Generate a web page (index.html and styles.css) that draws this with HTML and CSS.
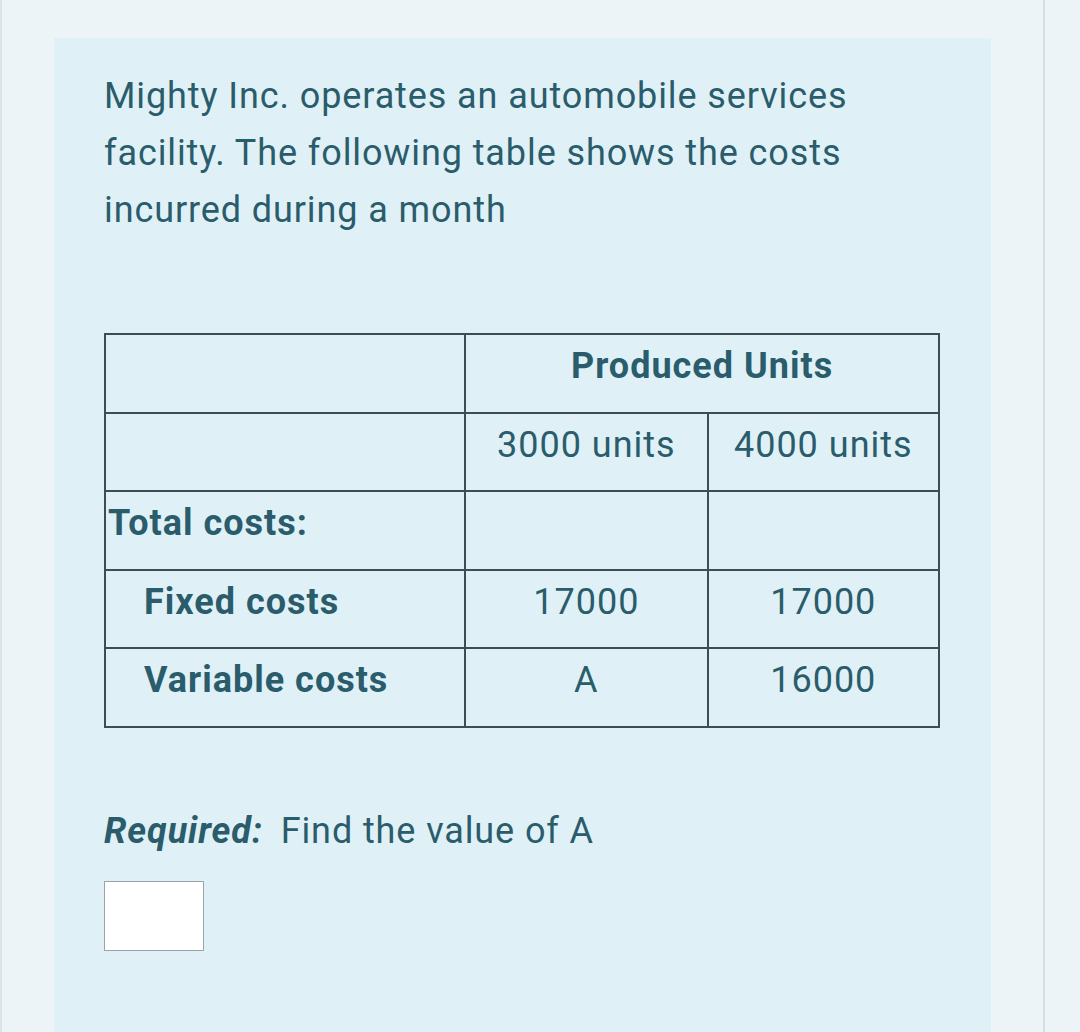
FILE: index.html
```html
<!DOCTYPE html>
<html>
<head>
<meta charset="utf-8">
<link rel="stylesheet" href="styles.css">
</head>
<body>
<div class="page">
  <div class="card">
    <p class="intro">Mighty Inc. operates an automobile services facility. The following table shows the costs incurred during a month</p>
    <table class="costs">
      <colgroup>
        <col class="c1"><col class="c2"><col class="c3">
      </colgroup>
      <tr>
        <td></td>
        <td colspan="2" class="center bold">Produced Units</td>
      </tr>
      <tr>
        <td></td>
        <td class="center">3000 units</td>
        <td class="center">4000 units</td>
      </tr>
      <tr>
        <td class="bold flush">Total costs:</td>
        <td></td>
        <td></td>
      </tr>
      <tr>
        <td class="bold indent">Fixed costs</td>
        <td class="center">17000</td>
        <td class="center">17000</td>
      </tr>
      <tr>
        <td class="bold indent">Variable costs</td>
        <td class="center">A</td>
        <td class="center">16000</td>
      </tr>
    </table>
    <p class="required"><span class="req-label">Required:</span> Find the value of A</p>
    <div class="answer"></div>
  </div>
</div>
</body>
</html>
```

FILE: styles.css
```css
html, body {
  margin: 0;
  padding: 0;
}
body {
  background: #edf4f7;
  font-family: Roboto, "Liberation Sans", sans-serif;
  color: #2a5c6b;
  width: 1080px;
  height: 1032px;
  overflow: hidden;
}
.page {
  box-sizing: border-box;
  height: 1032px;
  width: 1045px;
  border-left: 2px solid #dbe4e8;
  border-right: 2px solid #d6dfe3;
  padding: 38px 0 0 52px;
}
.card {
  background: #dff1f7;
  width: 937px;
  height: 994px;
  box-sizing: border-box;
  padding: 30px 50px 0 50px;
}
.intro {
  margin: 0;
  font-size: 36px;
  letter-spacing: 0.9px;
  line-height: 57px;
  width: 790px;
}
.costs {
  margin-top: 94px;
  border-collapse: collapse;
  width: 836px;
  font-size: 36px;
  letter-spacing: 1px;
}
.c1 { width: 361px; }
.c2 { width: 243px; }
.c3 { width: 232px; }
.costs td {
  border: 2px solid #3e4d52;
  height: 78.6px;
  box-sizing: border-box;
  vertical-align: top;
  padding: 10px 0 0 0;
  line-height: 42px;
}
.center { text-align: center; }
.bold { font-weight: 700; }
.flush { padding-left: 2px !important; }
.indent { padding-left: 38px !important; }
.required {
  margin: 82px 0 0 0;
  font-size: 36px;
  letter-spacing: 0.9px;
  line-height: 42px;
}
.req-label {
  font-weight: 700;
  font-style: italic;
  margin-right: 8px;
}
.answer {
  margin-top: 29px;
  width: 100px;
  height: 70px;
  box-sizing: border-box;
  background: #ffffff;
  border: 1px solid #9aa5aa;
}
```
